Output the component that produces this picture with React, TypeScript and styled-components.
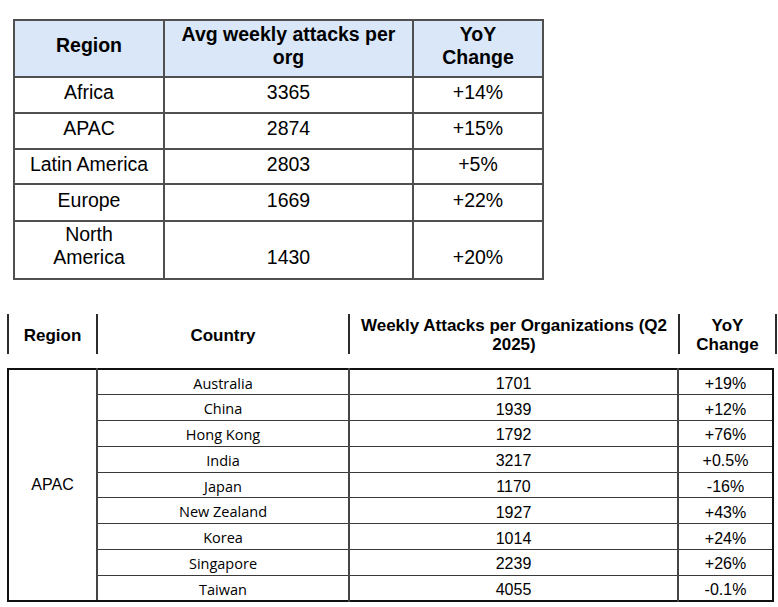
import React from "react";
import styled, { createGlobalStyle } from "styled-components";

const GlobalStyle = createGlobalStyle`
  html, body { margin: 0; padding: 0; background: #ffffff; }
  body {
    font-family: "Liberation Sans", Arial, sans-serif;
    color: #000;
    width: 778px;
    height: 607px;
    overflow: hidden;
  }
`;

const Page = styled.div`
  display: flex;
  flex-direction: column;
  align-items: flex-start;
  padding-top: 19px;
`;

const SummaryTable = styled.table`
  margin-left: 13px;
  width: 529px;
  border-collapse: collapse;
  table-layout: fixed;
`;

const SummaryHead = styled.th`
  background: #d9e7f8;
  border: 2px solid #4f4f4f;
  font-weight: 700;
  font-size: 19.5px;
  line-height: 23px;
  text-align: center;
  vertical-align: middle;
  padding: 0 6px 6px;
`;

const SummaryRow = styled.tr<{ $h: number }>`
  height: ${(p) => p.$h}px;
`;

const SummaryCell = styled.td<{ $bottom?: boolean }>`
  border: 2px solid #4f4f4f;
  font-size: 19.5px;
  line-height: 23px;
  text-align: center;
  vertical-align: ${(p) => (p.$bottom ? "bottom" : "middle")};
  padding: ${(p) => (p.$bottom ? "0 6px 9px" : "0 6px 5px")};
`;

const HeadTable = styled.table`
  margin-top: 34px;
  margin-left: 7px;
  width: 768px;
  border-collapse: collapse;
  table-layout: fixed;
`;

const HeadRow = styled.tr`
  height: 39px;
`;

const HeadCell = styled.th<{ $last?: boolean }>`
  border-left: 2px solid #2b2b2b;
  border-right: ${(p) => (p.$last ? "2px solid #2b2b2b" : "none")};
  font-weight: 700;
  font-size: 17px;
  line-height: 19px;
  text-align: center;
  vertical-align: middle;
  padding: 2px 4px 0;
`;

const DetailTable = styled.table`
  margin-top: 14px;
  margin-left: 7px;
  width: 765px;
  border-collapse: collapse;
  table-layout: fixed;
  border: 2px solid #111;
`;

const DetailRow = styled.tr`
  height: 25.8px;
`;

const RegionCell = styled.td`
  border: 2px solid #111;
  border-right: 2px solid #444;
  font-size: 16px;
  text-align: center;
  vertical-align: middle;
  padding: 0;
`;

const CountryCell = styled.td`
  border-top: 1px solid #3a3a3a;
  border-bottom: 1px solid #3a3a3a;
  border-left: 2px solid #444;
  border-right: 2px solid #444;
  font-family: "Open Sans", "Liberation Sans", sans-serif;
  font-size: 14.5px;
  line-height: 18px;
  text-align: center;
  vertical-align: middle;
  padding: 3px 0 0;
`;

const ValueCell = styled.td<{ $last?: boolean }>`
  border-top: 1px solid #3a3a3a;
  border-bottom: 1px solid #3a3a3a;
  border-left: 2px solid #444;
  border-right: ${(p) => (p.$last ? "2px solid #111" : "2px solid #444")};
  font-size: 16px;
  line-height: 18px;
  text-align: center;
  vertical-align: middle;
  padding: 4px 0 0;
`;

const summary = [
  { region: "Africa", avg: "3365", yoy: "+14%", h: 36 },
  { region: "APAC", avg: "2874", yoy: "+15%", h: 36 },
  { region: "Latin America", avg: "2803", yoy: "+5%", h: 35 },
  { region: "Europe", avg: "1669", yoy: "+22%", h: 37 },
];

const detail = [
  ["Australia", "1701", "+19%"],
  ["China", "1939", "+12%"],
  ["Hong Kong", "1792", "+76%"],
  ["India", "3217", "+0.5%"],
  ["Japan", "1170", "-16%"],
  ["New Zealand", "1927", "+43%"],
  ["Korea", "1014", "+24%"],
  ["Singapore", "2239", "+26%"],
  ["Taiwan", "4055", "-0.1%"],
];

export default function App() {
  return (
    <>
      <GlobalStyle />
      <Page>
        <SummaryTable>
          <colgroup>
            <col style={{ width: 150 }} />
            <col style={{ width: 249 }} />
            <col style={{ width: 130 }} />
          </colgroup>
          <thead>
            <SummaryRow $h={57}>
              <SummaryHead>Region</SummaryHead>
              <SummaryHead>Avg weekly attacks per org</SummaryHead>
              <SummaryHead>
                YoY
                <br />
                Change
              </SummaryHead>
            </SummaryRow>
          </thead>
          <tbody>
            {summary.map((r) => (
              <SummaryRow key={r.region} $h={r.h}>
                <SummaryCell>{r.region}</SummaryCell>
                <SummaryCell>{r.avg}</SummaryCell>
                <SummaryCell>{r.yoy}</SummaryCell>
              </SummaryRow>
            ))}
            <SummaryRow $h={58}>
              <SummaryCell $bottom>
                North
                <br />
                America
              </SummaryCell>
              <SummaryCell $bottom>1430</SummaryCell>
              <SummaryCell $bottom>+20%</SummaryCell>
            </SummaryRow>
          </tbody>
        </SummaryTable>

        <HeadTable>
          <colgroup>
            <col style={{ width: 89 }} />
            <col style={{ width: 252 }} />
            <col style={{ width: 330 }} />
            <col style={{ width: 97 }} />
          </colgroup>
          <thead>
            <HeadRow>
              <HeadCell>Region</HeadCell>
              <HeadCell>Country</HeadCell>
              <HeadCell>Weekly Attacks per Organizations (Q2 2025)</HeadCell>
              <HeadCell $last>
                YoY
                <br />
                Change
              </HeadCell>
            </HeadRow>
          </thead>
        </HeadTable>

        <DetailTable>
          <colgroup>
            <col style={{ width: 89 }} />
            <col style={{ width: 252 }} />
            <col style={{ width: 329 }} />
            <col style={{ width: 95 }} />
          </colgroup>
          <tbody>
            {detail.map(([country, value, yoy], i) => (
              <DetailRow key={country}>
                {i === 0 && <RegionCell rowSpan={detail.length}>APAC</RegionCell>}
                <CountryCell>{country}</CountryCell>
                <ValueCell>{value}</ValueCell>
                <ValueCell $last>{yoy}</ValueCell>
              </DetailRow>
            ))}
          </tbody>
        </DetailTable>
      </Page>
    </>
  );
}
